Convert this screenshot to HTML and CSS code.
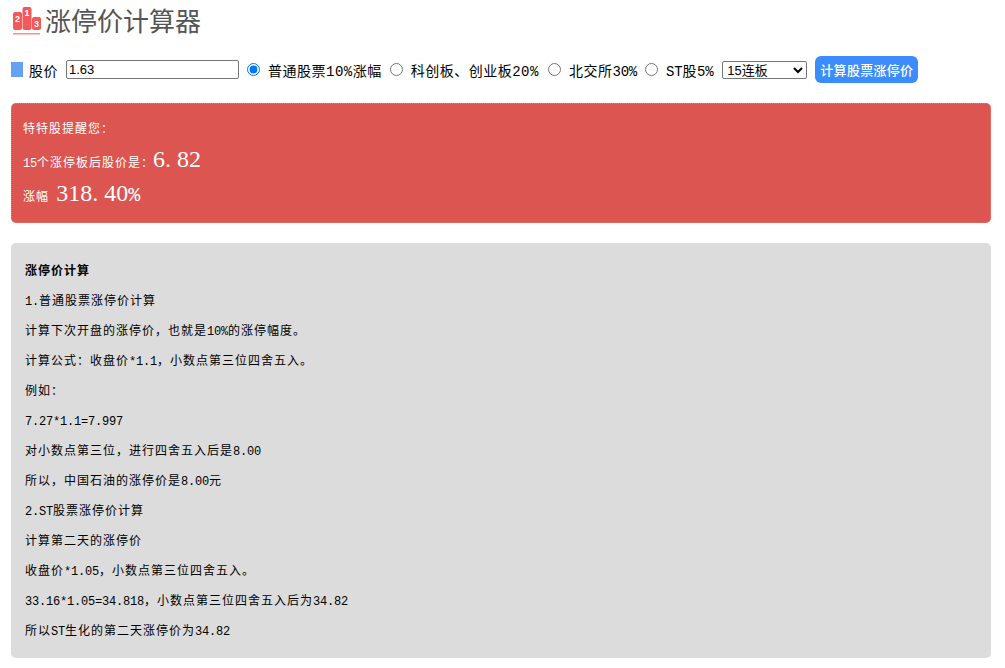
FILE: index.html
```html
<!DOCTYPE html>
<html lang="zh-CN">
<head>
<meta charset="utf-8">
<title>涨停价计算器</title>
<link rel="stylesheet" href="styles.css">
</head>
<body>
<main class="page">
  <h1 class="title">
    <svg class="logo" viewBox="0 0 28 28" width="28" height="28" aria-hidden="true">
      <rect x="0" y="5" width="9" height="18" rx="2" fill="#f2595b"/>
      <rect x="9.500" y="0" width="9" height="23" rx="2" fill="#f2595b"/>
      <rect x="19" y="10" width="9" height="13" rx="2" fill="#f2595b"/>
      <rect x="0" y="26" width="27" height="1.500" fill="#f7908f"/>
      <text x="4.500" y="15" class="logo-num">2</text>
      <text x="14" y="9" class="logo-num">1</text>
      <text x="23.500" y="20" class="logo-num">3</text>
    </svg>
    <span>涨停价计算器</span>
  </h1>
  <form class="controls">
    <span class="marker"></span>
    <label class="price-label" for="price">股价</label>
    <input class="price" id="price" type="text" value="1.63">
    <label class="choice"><input type="radio" name="kind" checked><span>普通股票10%涨幅</span></label>
    <label class="choice"><input type="radio" name="kind"><span>科创板、创业板20%</span></label>
    <label class="choice wider"><input type="radio" name="kind"><span>北交所<span class="tight">30%</span></span></label>
    <label class="choice"><input type="radio" name="kind"><span><span class="tight">ST</span>股<span class="tight">5%</span></span></label>
    <select class="boards"><option>15连板</option></select>
    <button class="calc" type="button">计算股票涨停价</button>
  </form>
  <section class="panel result">
    <p class="line">特特股提醒您：</p>
    <p class="line big first-big"><span class="l">15</span>个涨停板后股价是：<strong>6<span class="dot">.</span>82</strong></p>
    <p class="line big">涨幅 <strong>318<span class="dot">.</span>40<span class="pct">%</span></strong></p>
  </section>
  <section class="panel info">
    <p><b>涨停价计算</b></p>
    <p><span class="l">1.</span>普通股票涨停价计算</p>
    <p>计算下次开盘的涨停价，也就是<span class="l">10%</span>的涨停幅度。</p>
    <p>计算公式：收盘价<span class="l">*1.1</span>，小数点第三位四舍五入。</p>
    <p>例如：</p>
    <p><span class="l">7.27*1.1=7.997</span></p>
    <p>对小数点第三位，进行四舍五入后是<span class="l">8.00</span></p>
    <p>所以，中国石油的涨停价是<span class="l">8.00</span>元</p>
    <p><span class="l">2.ST</span>股票涨停价计算</p>
    <p>计算第二天的涨停价</p>
    <p>收盘价<span class="l">*1.05</span>，小数点第三位四舍五入。</p>
    <p><span class="l">33.16*1.05=34.818</span>，小数点第三位四舍五入后为<span class="l">34.82</span></p>
    <p>所以<span class="l">ST</span>生化的第二天涨停价为<span class="l">34.82</span></p>
  </section>
</main>
</body>
</html>
```
FILE: styles.css
```css
* { box-sizing: border-box; }
html, body { margin: 0; background: #fff; }
body {
  font-family: "Liberation Mono", "Noto Sans CJK SC", monospace;
  color: #000;
}
.page { width: 980px; margin-left: 11px; }
.title {
  display: flex;
  align-items: center;
  gap: 4px;
  height: 38px;
  margin: 0;
  font-family: "Noto Sans CJK SC", sans-serif;
  font-size: 26px;
  font-weight: 400;
  color: #555;
}
.logo { align-self: flex-start; margin: 7px 0 0 2px; flex: none; }
.logo-num {
  font-family: "Liberation Sans", sans-serif;
  font-size: 9px;
  font-weight: 700;
  fill: #fff;
  text-anchor: middle;
}
.controls {
  display: flex;
  align-items: center;
  height: 27px;
  margin-top: 18px;
  font-size: 14px;
  letter-spacing: .5px;
}
.marker { width: 12px; height: 15px; background: #65a2f5; }
.price-label { margin-left: 6px; }
.price {
  width: 173px;
  height: 19px;
  margin: 0 0 0 8px;
  padding: 1px 2px;
  border: 1px solid #767676;
  border-radius: 2px;
  font-family: "Liberation Sans", sans-serif;
  font-size: 13px;
  letter-spacing: 0;
}
.choice { display: flex; align-items: center; margin-left: 8px; white-space: nowrap; }
.choice.wider { margin-left: 9px; }
.choice input { width: 13px; height: 13px; margin: 0 8px 0 0; }
.tight { letter-spacing: -.2px; }
.boards {
  width: 85px;
  height: 18px;
  margin-left: 9px;
  font-family: "Liberation Sans", "Noto Sans CJK SC", sans-serif;
  font-size: 13px;
  letter-spacing: 0;
  background: #fff;
  border: 1px solid #767676;
  border-radius: 2px;
}
.calc {
  width: 103px;
  height: 27px;
  margin-left: 8px;
  padding: 0;
  border: 0;
  border-radius: 6px;
  background: #3b8cff;
  color: #fff;
  font-family: "Noto Sans CJK SC", sans-serif;
  font-size: 13px;
  font-weight: 500;
  letter-spacing: .3px;
}
.panel {
  border-radius: 5px;
  font-size: 12px;
  letter-spacing: 1px;
}
.panel p { margin: 0; line-height: 30px; }
.l { letter-spacing: -.2px; }
.result {
  height: 120px;
  margin-top: 20px;
  padding: 12px 11px 0;
  background: #dc5550;
  border: 1px dotted #ec7571;
  color: #fff;
}
.result .line { line-height: 28px; }
.result .big { line-height: 33px; }
.result .first-big { margin-top: 3px; }
.result strong {
  margin-left: -1px;
  font-family: "Liberation Serif", serif;
  font-size: 24px;
  font-weight: 400;
  line-height: 1;
  letter-spacing: 0;
}
.dot { margin-right: 6px; }
.pct { font-family: "Liberation Mono", monospace; font-size: 20px; }
.info {
  height: 415px;
  margin-top: 20px;
  padding: 14px 14px 0;
  background: #dcdcdc;
}
```
